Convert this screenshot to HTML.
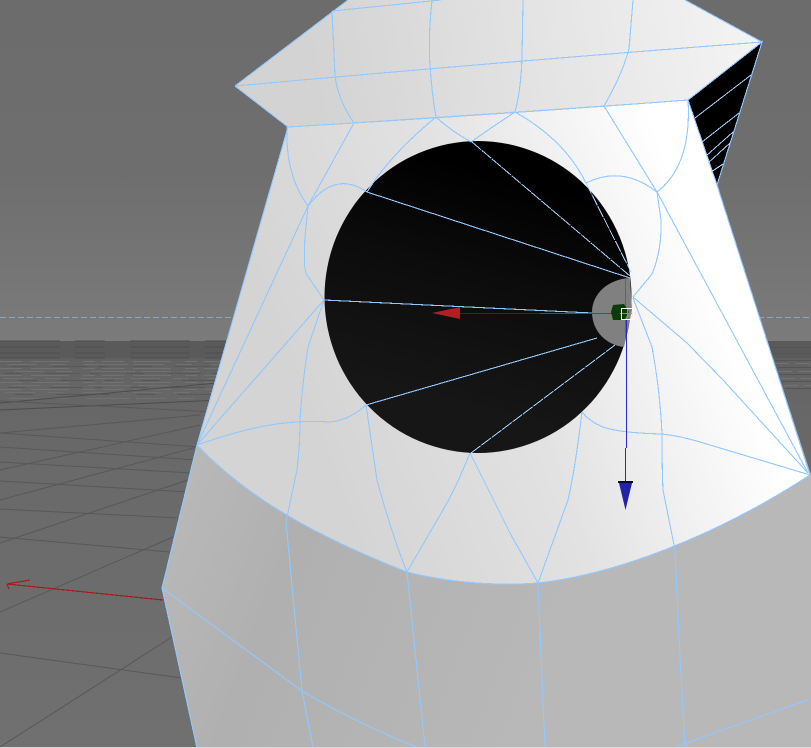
<!DOCTYPE html>
<html><head><meta charset="utf-8"><style>html,body{margin:0;padding:0;background:#6e6e6e}svg{display:block}</style></head><body>
<svg width="811" height="748" viewBox="0 0 811 748" xmlns="http://www.w3.org/2000/svg">
<defs>
<linearGradient id="sky" x1="0" y1="0" x2="0" y2="1"><stop offset="0" stop-color="#6c6c6c"/><stop offset=".5" stop-color="#6e6e6e"/><stop offset="1" stop-color="#7b7b7b"/></linearGradient>
<linearGradient id="gnd" x1="0" y1="0" x2="0" y2="1"><stop offset="0" stop-color="#5e5e5e"/><stop offset=".12" stop-color="#666"/><stop offset=".35" stop-color="#6a6a6a"/><stop offset="1" stop-color="#707070"/></linearGradient>
<linearGradient id="col" gradientUnits="userSpaceOnUse" x1="320" y1="110" x2="760" y2="40"><stop offset="0" stop-color="#d3d3d3"/><stop offset="1" stop-color="#f4f4f4"/></linearGradient>
<linearGradient id="up" gradientUnits="userSpaceOnUse" x1="300" y1="400" x2="700" y2="250"><stop offset="0" stop-color="#d4d4d4"/><stop offset=".5" stop-color="#e2e2e2"/><stop offset="1" stop-color="#fff"/></linearGradient>
<linearGradient id="lo" gradientUnits="userSpaceOnUse" x1="180" y1="500" x2="560" y2="640"><stop offset="0" stop-color="#b8b8b8"/><stop offset=".3" stop-color="#b0b0b0"/><stop offset="1" stop-color="#b8b8b8"/></linearGradient>
<linearGradient id="hole" gradientUnits="userSpaceOnUse" x1="490" y1="170" x2="430" y2="400"><stop offset="0" stop-color="#000"/><stop offset=".45" stop-color="#0c0c0c"/><stop offset="1" stop-color="#161616"/></linearGradient>
</defs>
<rect width="811" height="341" fill="url(#sky)"/>
<rect y="341" width="811" height="407" fill="url(#gnd)"/>
<rect y="341" width="811" height="17" fill="#5a5a5a"/>
<g fill="none" stroke-width="1" shape-rendering="crispEdges">
<path d="M0 341H240M0 347H240M0 353H240M0 358H240" stroke="#4e4e4e" stroke-dasharray="60 15 30 25"/>
<path d="M0 361.500H240M0 368.500H240M0 375.500H240M0 382.500H240M0 389.500H240" stroke="#727272" stroke-dasharray="22 9 38 14 12 7"/>
<path d="M7 364.500H240M14 371.500H240M3 378.500H240M11 385.500H240M5 392.500H240M9 398.500H240" stroke="#707070" stroke-dasharray="30 12 16 19 44 6"/>
<path d="M12 366.500H240M4 373.500H240M19 380.500H240M8 387.500H240M15 394.500H240" stroke="#585858" stroke-dasharray="18 23 34 11 9 27"/>
<path d="M770 347.500H811M772 353.500H811M775 360.500H811M778 367.500H811M780 374.500H811M782 381.500H811M785 388.500H811" stroke="#545454"/>
<path d="M775 363.500H811M778 371.500H811M781 378.500H811M784 385.500H811" stroke="#727272" stroke-dasharray="14 6"/>
</g>
<g stroke="#585858" fill="none" stroke-width="1">
<path d="M0 410L220 400M0 403L217 383" stroke="#4c4c4c"/>
<path d="M0 433L200 415M0 470L200 425M0 500L197 447M0 543L188 480M0 612L173 537M0 747L172 637"/>
<path d="M0 401L215 412M0 433L200 447M0 447L197 460M0 462L192 473M0 481L188 492M0 509L178 518M0 537L170 552M0 653L182 678"/>
</g>
<path d="M0 317.500H233M758 317.500H811" stroke="#86a6c4" stroke-width="1" stroke-dasharray="6 3" fill="none" shape-rendering="crispEdges"/>
<path d="M7 584L163 600M7 584L30 580M7 584L9 589" stroke="#a61c1c" stroke-width="1.200" fill="none" shape-rendering="crispEdges"/>
<path d="M762 42L688 100L717 185Z" fill="#000"/>
<path d="M197 445L162 588L197 748H811V475L717 185L288 127Z" fill="url(#lo)"/>
<path d="M288 127L197 445C240 490 300 530 407 572C450 583 500 586 538 583C610 575 710 540 810 475L717 185L688 100Z" fill="url(#up)"/>
<path d="M235 86L348 0H685L762 42L688 100L288 127Z" fill="url(#col)"/>
<ellipse cx="478" cy="297" rx="153.500" ry="156" fill="url(#hole)"/>
<path d="M630 278C608 279 592 294 592 312C592 331 606 345 624 347L632 310Z" fill="#808080"/>
<g fill="none" stroke="#90c8ff" stroke-width="1.100" shape-rendering="crispEdges">
<path d="M235 86L348 0M685 0L762 42M288 127L235 86M688 100L762 42L717 185M688 100L717 185M717 185L810 475M288 127L197 445L162 588L197 748"/>
<path d="M332 11L441 0M235 86Q500 62 762 42M288 127Q490 115 688 100"/>
<path d="M332 11L335 76Q338 100 354 123M432 0Q428 40 430 65Q432 95 436 117M523 0L522 57Q521 90 515 112M633 0L629 49Q622 75 604 106"/>
<path d="M354 123L308 206M436 117Q390 155 367 192M436 117Q450 130 471 142M515 112Q495 125 471 142M515 112Q565 140 586 183M604 106L657 192M688 100Q692 165 657 192M287 127Q285 175 308 206M308 206Q335 170 367 192M586 183Q622 165 657 192M657 192L661 220Q662 250 652 274L633 297M657 192L808 473"/>
<path d="M308 206L305 237Q303 270 307 275L324 300M197 445L308 206M197 445L324 300M197 445Q240 430 270 425Q300 420 330 422Q350 420 366 405"/>
<path d="M324 300L308 347Q302 385 300 420Q300 445 297 470L286 522"/>
<path d="M633 297L687 343L723 380L808 473M633 298L652 347Q660 390 662 434Q662 470 663 490L675 550M582 412Q590 422 603 427Q620 433 662 434Q680 436 700 442L810 475"/>
<path d="M197 445C240 490 300 530 407 572C450 583 500 586 538 583C610 575 710 540 810 475"/>
<path d="M366 405L377 480Q392 535 407 572M470 453Q455 490 443 510L407 572M470 453L510 533L538 583M582 412Q575 470 568 500L538 583"/>
<path d="M286 522L302 691L313 747M407 572L425 747M538 583L545 747M675 550L680 657L685 747M162 588L302 691Q360 725 417 747M675 747L810 699"/>
<path d="M367 192L630 278M324 300L592 313M366 405L597 338"/>
</g>
<g fill="none" stroke="#a8d4ff" stroke-width="1" shape-rendering="crispEdges">
<path d="M472 142L630 276M586 183L631 272M471 453L615 345" stroke-dasharray="12 1"/>
<path d="M695 118L751 75M702 142L739 113M706 156L733 132M708 163L730 143M711 172L723 164"/>
</g>
<rect x="460" y="313" width="80" height="1" fill="#4a2020"/>
<rect x="540" y="313" width="82" height="1" fill="#c02020"/>
<path d="M432 313L460 307V319Z" fill="#b02020"/>
<rect x="626" y="320" width="1" height="128" fill="#2828d0"/>
<rect x="625" y="448" width="1" height="34" fill="#2828d0"/>
<rect x="618" y="481" width="15" height="2" fill="#0a0a20"/>
<path d="M619 483H632L625.500 510Z" fill="#2222aa"/>
<rect x="625" y="278" width="1" height="59" fill="#2a8a2a"/>
<path d="M613 305L624 304L629 312L624 320L613 320L611 312Z" fill="#0a3c0a"/>
<rect x="620" y="313" width="12" height="1" fill="#30d030"/>
<rect x="627" y="309" width="1" height="8" fill="#30d030"/>
<rect x="621.500" y="308.500" width="12" height="11" fill="none" stroke="#fff" stroke-width="1" shape-rendering="crispEdges"/>
<rect y="747" width="811" height="1" fill="#d8d8d8"/>
</svg>
</body></html>
